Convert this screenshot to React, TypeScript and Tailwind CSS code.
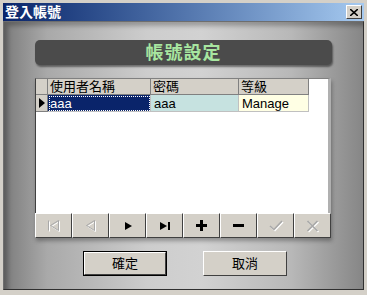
import { ReactNode } from "react";

const cjk = "font-['Liberation_Sans','Noto_Sans_CJK_TC',sans-serif]";

type NavBtn = { icon: ReactNode };

function Etched({ children }: { children: ReactNode }) {
  // disabled glyph: white offset copy under a gray one
  return (
    <span className="relative inline-block w-[14px] h-[12px]">
      <span className="absolute left-[1px] top-[1px] text-white">{children}</span>
      <span className="absolute left-0 top-0 text-[#a8a8a8]">{children}</span>
    </span>
  );
}

const firstIcon = (
  <svg width="13" height="11" viewBox="0 0 13 11" fill="none" stroke="currentColor" strokeWidth="1">
    <path d="M1.5 0.5v10M11.5 0.5L3.5 5.5L11.5 10.5Z" />
  </svg>
);
const prevIcon = (
  <svg width="13" height="11" viewBox="0 0 13 11" fill="none" stroke="currentColor" strokeWidth="1">
    <path d="M10.5 0.5L2.5 5.5L10.5 10.5Z" />
  </svg>
);
const checkIcon = (
  <svg width="14" height="11" viewBox="0 0 14 11" fill="none" stroke="currentColor" strokeWidth="1.6">
    <path d="M1 6L5 9.5L13 1" />
  </svg>
);
const crossIcon = (
  <svg width="13" height="12" viewBox="0 0 13 12" fill="none" stroke="currentColor" strokeWidth="1.6">
    <path d="M1.5 1L11.5 11M11.5 1L1.5 11" />
  </svg>
);

const navButtons: NavBtn[] = [
  { icon: <Etched>{firstIcon}</Etched> },
  { icon: <Etched>{prevIcon}</Etched> },
  {
    icon: (
      <svg width="10" height="10" viewBox="0 0 10 10">
        <path d="M2 1L9 5L2 9Z" fill="black" />
      </svg>
    ),
  },
  {
    icon: (
      <svg width="12" height="10" viewBox="0 0 12 10">
        <path d="M1 1L8 5L1 9Z" fill="black" />
        <rect x="9" y="1" width="2" height="8" fill="black" />
      </svg>
    ),
  },
  {
    icon: (
      <svg width="11" height="11" viewBox="0 0 11 11">
        <rect x="4" y="0" width="3" height="11" fill="black" />
        <rect x="0" y="4" width="11" height="3" fill="black" />
      </svg>
    ),
  },
  {
    icon: (
      <svg width="11" height="3" viewBox="0 0 11 3">
        <rect x="0" y="0" width="11" height="3" fill="black" />
      </svg>
    ),
  },
  { icon: <Etched>{checkIcon}</Etched> },
  { icon: <Etched>{crossIcon}</Etched> },
];

function App() {
  return (
    <div className={`w-[367px] h-[295px] bg-[#d4d0c8] p-[3px] pb-[5px] flex flex-col ${cjk}`}>
      {/* 標題列 */}
      <div className="h-[18px] shrink-0 flex items-center justify-between pl-[2px] pr-[2px] bg-gradient-to-r from-[#0a246a] to-[#a6caf0]">
        <span className="text-white text-[14px] font-bold leading-none">登入帳號</span>
        <div className="w-[16px] h-[14px] bg-[#d4d0c8] flex items-center justify-center border border-t-white border-l-white border-r-[#404040] border-b-[#404040]">
          <svg width="8" height="7" viewBox="0 0 8 7">
            <path d="M0 0L8 7M8 0L0 7" stroke="black" strokeWidth="1.6" />
          </svg>
        </div>
      </div>

      {/* 金屬背景 */}
      <div className="flex-1 relative border border-t-[#6e6e6e] border-l-[#6e6e6e] border-r-[#303030] border-b-[#303030] shadow-[inset_4px_4px_4px_rgba(0,0,0,0.25)] bg-[linear-gradient(90deg,#7c7c7c_0%,#a9a9a9_12%,#cdcdcd_40%,#d2d2d2_55%,#b8b8b8_80%,#868686_100%)]">
        <div className="pl-[31px] pt-[18px] w-[330px]">
          {/* 標題 */}
          <div className="h-[25px] w-[297px] rounded-[5px] bg-[#4b4b4b] shadow-[1px_2px_2px_rgba(0,0,0,0.45)] flex items-center justify-center">
            <span className="text-[#a8e6a0] text-[18px] font-bold leading-none tracking-[1px]">帳號設定</span>
          </div>

          {/* 表格 */}
          <div className="mt-[13px] w-[296px] shadow-[1px_3px_4px_rgba(0,0,0,0.3)]">
            <div className="h-[135px] bg-white border-l border-t border-l-[#404040] border-t-[#808080] border-r-[3px] border-r-[#b0b0b0] text-[13px] leading-none">
              <div className="flex h-[16px]">
                <div className="w-[12px] bg-[#d4d0c8] border-r border-b border-[#808080]" />
                <div className="w-[103px] bg-[#d4d0c8] border-r border-b border-[#808080] pl-[2px] flex items-center">使用者名稱</div>
                <div className="w-[88px] bg-[#d4d0c8] border-r border-b border-[#808080] pl-[2px] flex items-center">密碼</div>
                <div className="w-[70px] bg-[#d4d0c8] border-r border-b border-[#808080] pl-[2px] flex items-center">等級</div>
              </div>
              <div className="flex h-[17px]">
                <div className="w-[12px] bg-[#d4d0c8] border-r border-b border-[#808080] flex items-center justify-center">
                  <svg width="6" height="10" viewBox="0 0 6 10">
                    <path d="M0 0L6 5L0 10Z" fill="black" />
                  </svg>
                </div>
                <div className="w-[103px] bg-[#0a246a] text-white border-r border-b border-[#c0c0c0] outline-1 outline-dotted outline-offset-[-2px] outline-[#ffffff] flex items-center pl-[2px]">aaa</div>
                <div className="w-[88px] bg-[#c6e2e0] border-r border-b border-[#c0c0c0] flex items-center pl-[3px]">aaa</div>
                <div className="w-[70px] bg-[#ffffe4] border-r border-b border-[#c0c0c0] flex items-center pl-[3px]">Manage</div>
              </div>
            </div>

            {/* 導覽按鈕 */}
            <div className="flex h-[25px]">
              {navButtons.map((b, i) => (
                <div
                  key={i}
                  className="w-[37px] h-full bg-[#d4d0c8] border border-t-white border-l-white border-r-[#404040] border-b-[#404040] flex items-center justify-center"
                >
                  {b.icon}
                </div>
              ))}
            </div>
          </div>

          {/* 確定 / 取消 */}
          <div className="flex mt-[13px] pl-[48px] gap-[36px] text-[13px]">
            <div className="w-[84px] h-[25px] border border-black">
              <div className="w-full h-full bg-[#d4d0c8] border border-t-white border-l-white border-r-[#404040] border-b-[#404040] flex items-center justify-center">確定</div>
            </div>
            <div className="w-[84px] h-[25px] bg-[#d4d0c8] border border-t-white border-l-white border-r-[#404040] border-b-[#404040] flex items-center justify-center">取消</div>
          </div>
        </div>
      </div>
    </div>
  );
}

export default App;
